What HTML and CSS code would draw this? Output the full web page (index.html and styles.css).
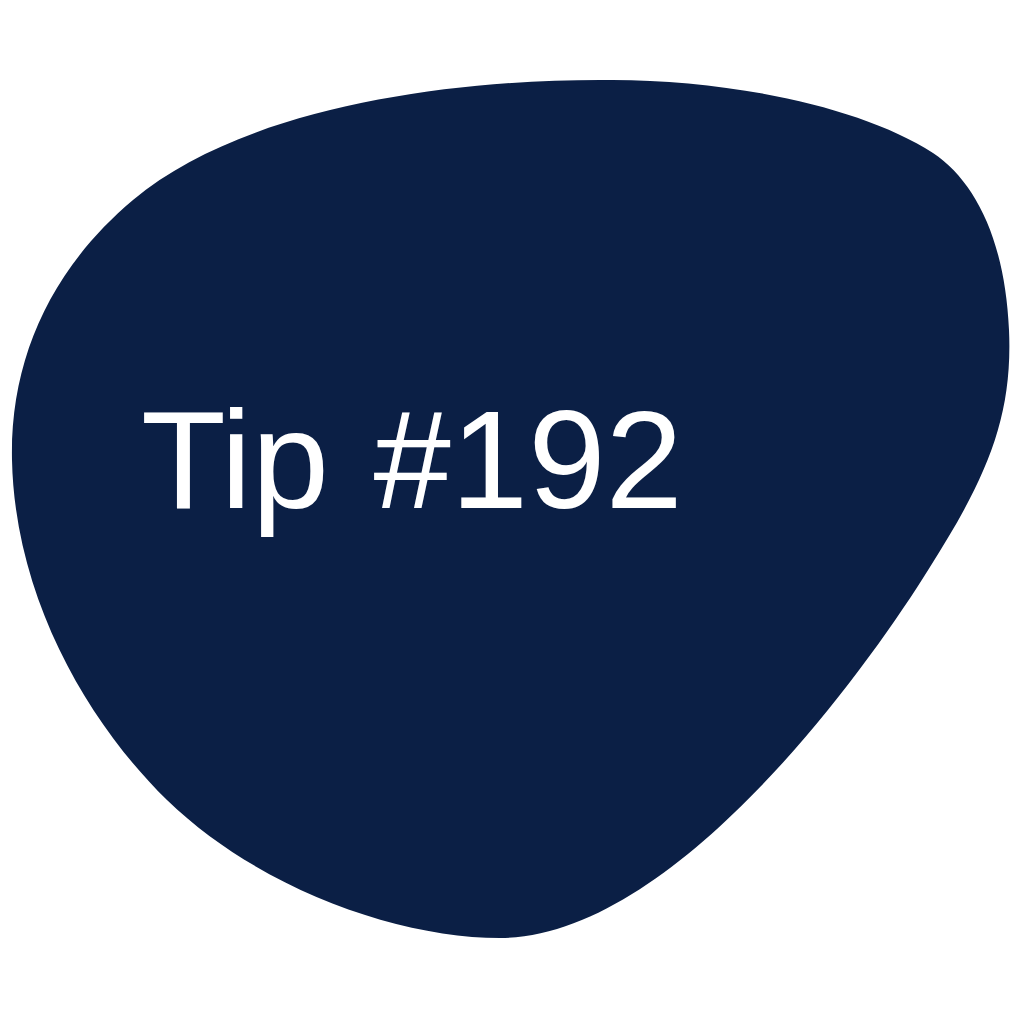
FILE: index.html
```html
<!DOCTYPE html>
<html lang="en">
<head>
    <meta charset="UTF-8">
    <meta name="viewport" content="width=device-width, initial-scale=1.0">
    <title>Tip #192</title>
    <link rel="stylesheet" href="styles.css">
</head>
<body>

    <div class="tip">
        <!-- background blob, traced from the artwork -->
        <svg class="blob" viewBox="0 0 1020 1020" width="1020" height="1020" aria-hidden="true">
            <path d="M600 80
                     C720 78 860 105 933 153
                     C975 181 1005 240 1009 330
                     C1013 420 985 480 930 567
                     C860 680 670 938 500 938
                     C400 938 260 890 167 800
                     C90 725 15 600 12 460
                     C10 360 50 270 133 200
                     C240 110 440 80 600 80 Z" fill="#0b1f45"/>
        </svg>
        <h1 class="tip-label">Tip #192</h1>
    </div>

</body>
</html>
```

FILE: styles.css
```css
body {
    margin: 0;
    background-color: #fff;
    font-family: "Liberation Sans", Arial, sans-serif;
}
.tip {
    position: relative;
    width: 1020px;
    height: 1020px;
    overflow: hidden;
}
.blob {
    position: absolute;
    top: 0;
    left: 0;
}
.tip-label {
    position: relative;
    margin: 0;
    padding: 390px 0 0 141px;
    font-size: 139px;
    font-weight: normal;
    line-height: 1;
    word-spacing: 6px;
    color: #fff;
}
```
